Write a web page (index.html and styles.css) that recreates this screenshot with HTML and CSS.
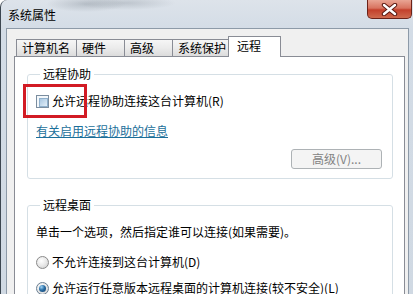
FILE: index.html
```html
<!DOCTYPE html>
<html lang="zh-CN">
<head>
    <meta charset="UTF-8">
    <title>系统属性</title>
    <link rel="stylesheet" href="styles.css">
</head>
<body>

<div class="window">
    <div class="titlebar">
        <span class="title">系统属性</span>
        <div class="close-btn">
            <svg width="17" height="13" viewBox="0 0 17 13">
                <path d="M3 2 L14 11 M14 2 L3 11" stroke="#5a1a12" stroke-width="4.4" stroke-linecap="round"/>
                <path d="M3 2 L14 11 M14 2 L3 11" stroke="#ffffff" stroke-width="2.4" stroke-linecap="round"/>
            </svg>
        </div>
    </div>

    <div class="client">
        <div class="tabs">
            <div class="tab tab-name">计算机名</div>
            <div class="tab tab-hw">硬件</div>
            <div class="tab tab-adv">高级</div>
            <div class="tab tab-prot">系统保护</div>
            <div class="tab active">远程</div>
        </div>

        <div class="panel">
            <fieldset class="group group-assist">
                <legend>远程协助</legend>
                <div class="row check-row">
                    <span class="checkbox"><span class="checkbox-inner"></span></span>
                    <span>允许远程协助连接这台计算机(R)</span>
                    <span class="highlight"></span>
                </div>
                <div class="row link-row">
                    <a class="link" href="#">有关启用远程协助的信息</a>
                </div>
                <div class="button-row">
                    <button class="win-button" disabled>高级(V)...</button>
                </div>
            </fieldset>

            <fieldset class="group group-desktop">
                <legend>远程桌面</legend>
                <div class="row hint-row">单击一个选项，然后指定谁可以连接(如果需要)。</div>
                <div class="row radio-row first-radio">
                    <span class="radio"></span>
                    <span>不允许连接到这台计算机(D)</span>
                </div>
                <div class="row radio-row">
                    <span class="radio checked"><span class="dot"></span></span>
                    <span>允许运行任意版本远程桌面的计算机连接(较不安全)(L)</span>
                </div>
            </fieldset>
        </div>
    </div>
</div>

</body>
</html>
```

FILE: styles.css
```css
body {
    margin: 0;
    font-family: "Noto Sans CJK SC", "Liberation Sans", sans-serif;
    font-size: 12px;
    color: #000;
    background: #ffffff;
}
.window {
    width: 413px;
    height: 294px;
    overflow: hidden;
    box-sizing: border-box;
    border-left: 1px solid #3c4650;
    border-top-left-radius: 7px;
    background:
        radial-gradient(ellipse 40px 8px at 85px 4px, rgba(120, 130, 140, 0.35), transparent),
        radial-gradient(ellipse 50px 7px at 125px 3px, rgba(120, 130, 140, 0.3), transparent),
        linear-gradient(to bottom, #dde3ea 0px, #d3dce6 30px, #d0d9e3 100%);
    display: flex;
    flex-direction: column;
}
.titlebar {
    height: 28px;
    display: flex;
    justify-content: space-between;
    align-items: flex-start;
    flex-shrink: 0;
}
.title {
    padding-left: 7px;
    line-height: 14px;
    margin-top: 8px;
}
.close-btn {
    width: 45px;
    height: 19px;
    margin-right: 1px;
    box-sizing: border-box;
    border: 1px solid #6b2218;
    border-top: none;
    border-radius: 0 0 5px 5px;
    background: linear-gradient(to bottom, #e9a594 0%, #d8735f 45%, #c3402b 55%, #cf6a4e 100%);
    display: flex;
    justify-content: center;
    align-items: center;
}
.client {
    flex: 1;
    margin: 0 4px 0 5px;
    background: #f0f0f0;
    border: 1px solid #8d9aa8;
    border-bottom: none;
    padding: 7px 3px 0 7px;
    display: flex;
    flex-direction: column;
}
.tabs {
    display: flex;
    align-items: flex-end;
    height: 20px;
    padding-left: 2px;
}
.tab {
    height: 17px;
    box-sizing: border-box;
    border: 1px solid #898c95;
    border-bottom: none;
    margin-right: -1px;
    background: linear-gradient(to bottom, #f6f6f6 0%, #ebebeb 50%, #dcdcdc 100%);
    line-height: 16px;
    padding-left: 5px;
    white-space: nowrap;
}
.tab-name { width: 61px; }
.tab-hw { width: 49px; }
.tab-adv { width: 49px; }
.tab-prot { width: 59px; }
.tab.active {
    width: 53px;
    height: 21px;
    margin-left: -2px;
    margin-bottom: -1px;
    background: #ffffff;
    padding-left: 8px;
    line-height: 18px;
    z-index: 1;
}
.panel {
    flex: 1;
    background: #ffffff;
    border: 1px solid #898c95;
    border-bottom: none;
    padding: 10px 11px 0 12px;
}
.group {
    margin: 0;
    padding: 0 10px 0 8px;
    min-width: 0;
    border: 1px solid #d5dfe5;
    border-radius: 3px;
}
.group legend {
    margin-left: 4px;
    padding: 0 3px;
    line-height: 14px;
}
.row {
    display: flex;
    align-items: center;
    line-height: 16px;
    height: 16px;
    white-space: nowrap;
}
.check-row {
    position: relative;
    margin-top: 12px;
}
.checkbox {
    width: 13px;
    height: 13px;
    box-sizing: border-box;
    border: 1px solid #7b8d9f;
    background: #f4f8fb;
    padding: 2px;
    margin-right: 3px;
}
.checkbox-inner {
    display: block;
    width: 7px;
    height: 7px;
    border: 1px solid #8fb0cc;
    background: linear-gradient(to bottom right, #a9c7e1, #e3eff9);
}
.highlight {
    position: absolute;
    left: -13px;
    top: -9px;
    width: 64px;
    height: 34px;
    box-sizing: border-box;
    border: 3px solid #d21b24;
}
.link-row {
    margin-top: 14px;
}
.link {
    color: #1b6f9a;
    text-decoration: underline;
}
.button-row {
    display: flex;
    justify-content: flex-end;
    margin-top: 10px;
    padding-bottom: 9px;
}
.win-button {
    width: 91px;
    height: 20px;
    box-sizing: border-box;
    border: 1px solid #adb2b5;
    border-radius: 3px;
    background: #f4f4f4;
    color: #838383;
    font-family: inherit;
    font-size: 12px;
    line-height: 16px;
    padding: 0;
}
.group-desktop {
    margin-top: 19px;
    padding-bottom: 10px;
}
.hint-row {
    margin-top: 12px;
}
.radio-row {
    margin-top: 10px;
}
.radio-row.first-radio {
    margin-top: 14px;
}
.radio {
    width: 13px;
    height: 13px;
    box-sizing: border-box;
    border: 1px solid #8a8a8a;
    border-radius: 50%;
    background: radial-gradient(circle at 40% 35%, #ffffff 0%, #e8e8e8 50%, #c9c9c9 100%);
    margin-right: 3px;
    display: flex;
    justify-content: center;
    align-items: center;
}
.radio.checked {
    border-color: #6a7f93;
}
.dot {
    width: 7px;
    height: 7px;
    border-radius: 50%;
    background: radial-gradient(circle at 35% 30%, #9fd3f5 0%, #2b6fa6 45%, #123c66 100%);
}
```
